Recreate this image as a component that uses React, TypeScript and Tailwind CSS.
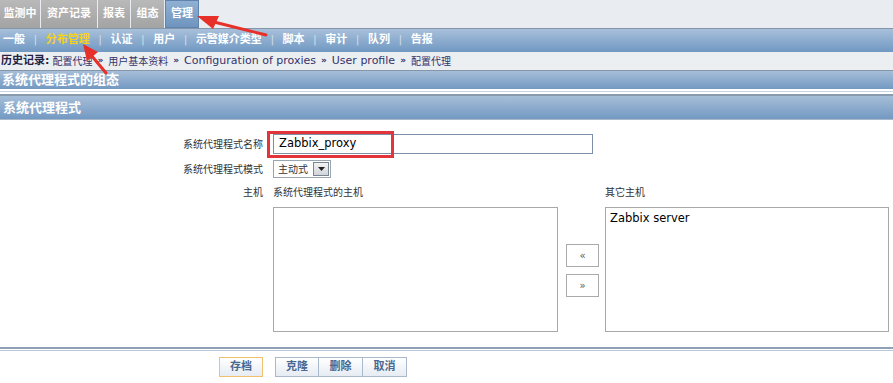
import React from "react";

const cjk = { fontFamily: '"DejaVu Sans", "Noto Sans CJK SC", sans-serif' };

function Tab({ label, active, w }: { label: string; active?: boolean; w: string }) {
  return (
    <div
      className={
        "h-full flex items-center justify-center text-[11px] font-bold text-white mr-[1px] " +
        w +
        " " +
        (active
          ? "bg-gradient-to-b from-[#8fb0d2] to-[#6f95bf] border border-[#5f83ad] h-[28px]"
          : "bg-gradient-to-b from-[#b9b9b9] to-[#a3a3a3] h-[27px]")
      }
    >
      {label}
    </div>
  );
}

const navItems = ["一般", "分布管理", "认证", "用户", "示警媒介类型", "脚本", "审计", "队列", "告报"];

function Btn({ label, primary, cls }: { label: string; primary?: boolean; cls?: string }) {
  return (
    <div
      className={
        "h-[20px] w-[44px] flex items-center justify-center text-[11px] font-bold text-[#4a6890] bg-gradient-to-b from-white to-[#e6ecf3] border " +
        (primary ? "border-[#f0c070]" : "border-[#a9b8ca]") +
        " " +
        (cls || "")
      }
    >
      {label}
    </div>
  );
}

function Sep() {
  return <span className="mx-[5px] text-[9px] font-bold">»</span>;
}

export default function App() {
  return (
    <div className="relative w-[893px] h-[383px] bg-white overflow-hidden" style={cjk}>
      {/* Top tabs */}
      <div className="h-[28px] flex items-start bg-[#e9edf1]">
        <Tab label="监测中" w="w-[40px]" />
        <Tab label="资产记录" w="w-[56px]" />
        <Tab label="报表" w="w-[32px]" />
        <Tab label="组态" w="w-[33px]" />
        <Tab label="管理" w="w-[34px]" active />
      </div>

      {/* Nav */}
      <div className="h-[24px] flex items-center border-t border-[#8596a8] bg-gradient-to-b from-[#a8c0da] to-[#7098c2] pl-[3px]">
        {navItems.map((n, i) => (
          <React.Fragment key={n}>
            {i > 0 && <span className="text-[#d0dcea] text-[11px] mx-[8.5px]">|</span>}
            <span
              className={
                "text-[11px] font-bold " + (n === "分布管理" ? "text-[#f5d21a]" : "text-white")
              }
            >
              {n}
            </span>
          </React.Fragment>
        ))}
      </div>

      {/* Breadcrumb */}
      <div className="h-[18px] flex items-center bg-[#eceff2] text-[11px] text-[#33336b] pl-[1px]">
        <span className="font-bold text-[#222244]">历史记录:</span>
        <span className="ml-[3px] text-[10px]">配置代理</span>
        <Sep />
        <span className="text-[10px]">用户基本资料</span>
        <Sep />
        <span>Configuration of proxies</span>
        <Sep />
        <span>User profile</span>
        <Sep />
        <span className="text-[10px]">配置代理</span>
      </div>

      {/* Header 1 */}
      <div className="h-[19px] flex items-center border-t border-[#8596a8] bg-gradient-to-b from-[#a6bed8] to-[#7399c2] pl-[2px] text-white font-bold text-[13px]">
        系统代理程式的组态
      </div>
      <div className="h-[5px] bg-white flex flex-col justify-center">
        <div className="h-[1px] bg-[#c6d4e4]" />
      </div>

      {/* Header 2 */}
      <div className="h-[25px] flex items-center border-t-2 border-[#8a9bb0] bg-gradient-to-b from-[#a6bed8] to-[#7399c2] pl-[3px] text-white font-bold text-[13px]">
        系统代理程式
      </div>
      <div className="h-[1px] bg-[#a8b8c8]" />

      {/* Form */}
      <div className="grid grid-cols-[263px_1fr] gap-x-[10px] text-[10px] text-[#333] pt-[14px]">
        <div className="h-[20px] flex items-center justify-end">系统代理程式名称</div>
        <div className="h-[20px] w-[320px] border border-[#7d8fa6] flex items-center pl-[5px] text-[11.5px] text-black">
          Zabbix_proxy
        </div>

        <div className="h-[18px] flex items-center justify-end mt-[6px]">系统代理程式模式</div>
        <div className="mt-[6px] h-[18px] w-[58px] border border-[#9aa5b2] flex items-center justify-between pl-[4px] pr-[1px]">
          <span>主动式</span>
          <span className="w-[16px] h-[14px] border border-[#7a8594] bg-gradient-to-b from-[#f3f3f3] to-[#d0d4d9] flex items-center justify-center">
            <svg width="7" height="4" viewBox="0 0 7 4">
              <path d="M0 0 H7 L3.5 4 Z" fill="#222" />
            </svg>
          </span>
        </div>

        <div className="mt-[7px] h-[14px] flex items-center justify-end">主机</div>
        <div className="mt-[7px] flex">
          <div className="w-[293px] h-[14px] flex items-center">系统代理程式的主机</div>
          <div className="w-[39px]" />
          <div className="h-[14px] flex items-center">其它主机</div>
        </div>

        <div />
        <div className="mt-[8px] flex items-center">
          <div className="w-[285px] h-[125px] border border-[#a8a8a8]" />
          <div className="ml-[8px] mr-[6px] flex flex-col gap-[7px] mt-[2px]">
            <div className="w-[33px] h-[23px] border border-[#aaa] flex items-center justify-center text-[10px] text-[#555]">«</div>
            <div className="w-[33px] h-[23px] border border-[#aaa] flex items-center justify-center text-[10px] text-[#555]">»</div>
          </div>
          <div className="w-[284px] h-[125px] border border-[#a8a8a8] pl-[4px] pt-[2px] text-[11.5px] text-black">
            Zabbix server
          </div>
        </div>
      </div>

      {/* Footer */}
      <div className="mt-[15px] border-t-2 border-[#8da0b6]">
        <div className="h-[1px] mt-[1px] bg-[#b9c8d8]" />
        <div className="h-[32px] flex items-center pl-[219px] bg-white">
          <Btn label="存档" primary />
          <div className="ml-[12px] flex">
            <Btn label="克隆" />
            <Btn label="删除" cls="border-l-0" />
            <Btn label="取消" cls="border-l-0" />
          </div>
        </div>
        <div className="h-[2px] bg-[#98a9bc]" />
      </div>

      {/* Annotations */}
      <div className="absolute left-[267px] top-[131px] w-[127px] h-[27px] border-[3px] border-[#e2343a]" />
      <svg className="absolute left-0 top-0" width="893" height="383" viewBox="0 0 893 383">
        <path d="M266 35 L214 22" stroke="#e8302a" strokeWidth="3" strokeLinecap="round" />
        <path d="M197 16 L219 16 L213 29 Z" fill="#e8302a" />
        <path d="M106 73 L91 55" stroke="#e8302a" strokeWidth="3" strokeLinecap="round" />
        <path d="M83 44 L98 52 L87 61 Z" fill="#e8302a" />
      </svg>
    </div>
  );
}
